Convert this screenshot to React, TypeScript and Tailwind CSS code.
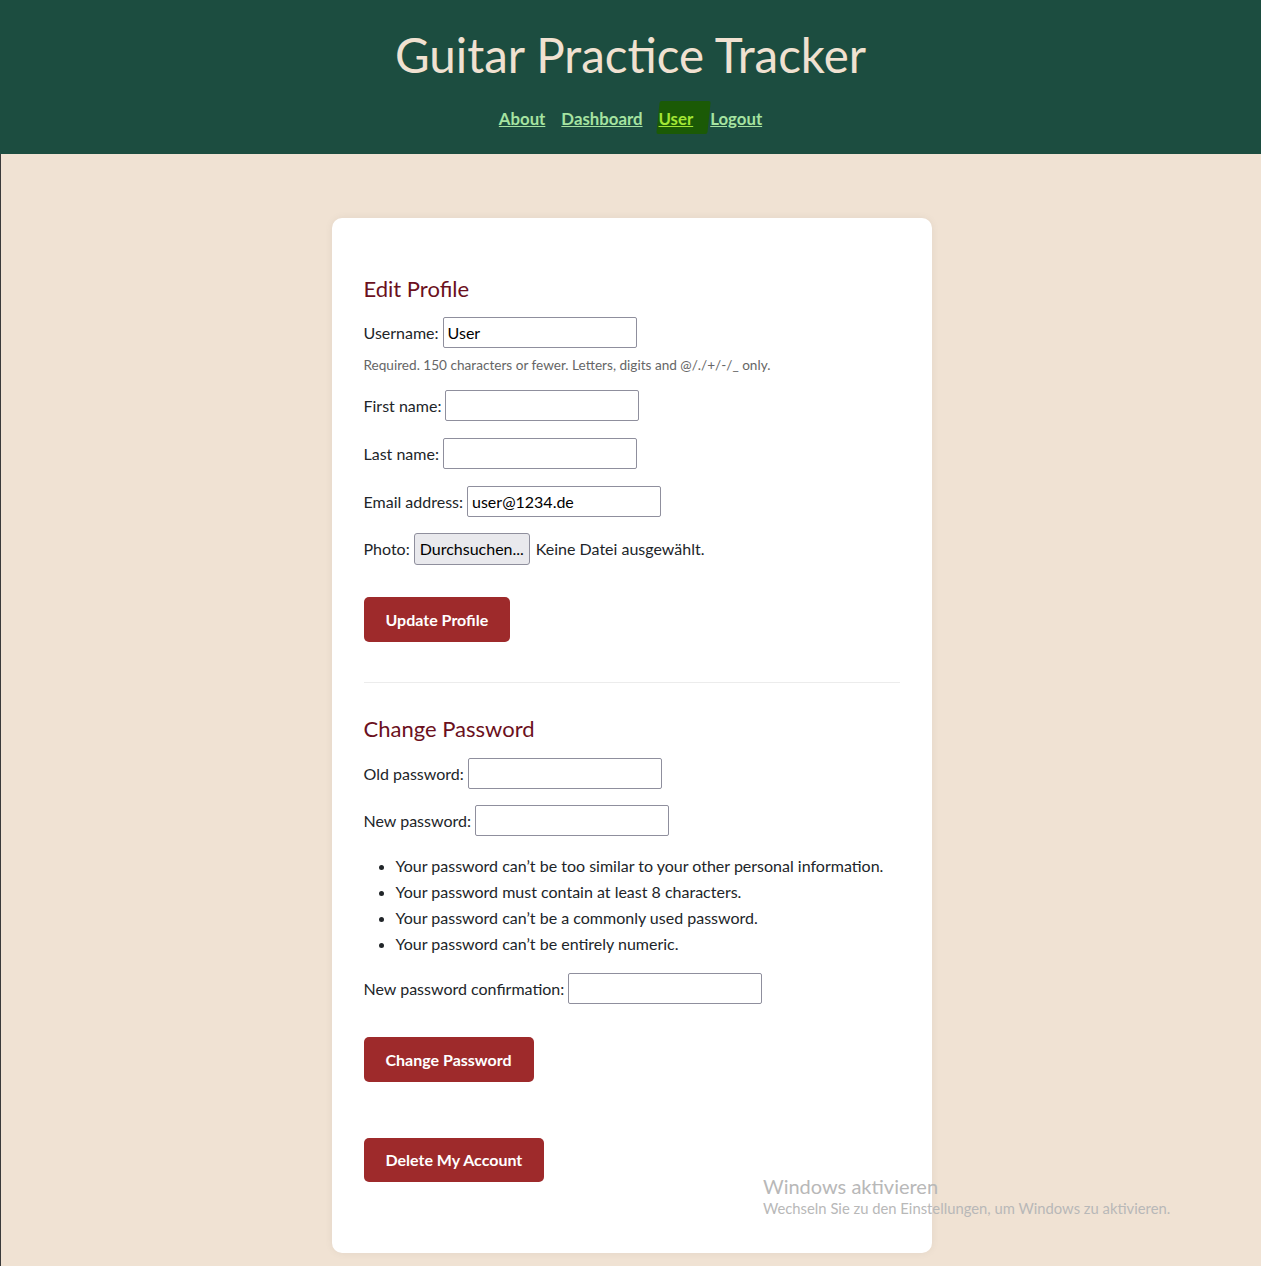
import React from "react";

const font = { fontFamily: 'Lato, "Noto Sans", sans-serif' };

function Field({ label, value = "", type = "text" }: { label: string; value?: string; type?: string }) {
  return (
    <div className="flex items-center text-[16px] text-[#212529]">
      <label>{label}</label>
      <input
        type={type}
        defaultValue={value}
        className="ml-[4px] h-[31px] w-[194px] rounded-[2px] border border-[#8f8f9d] bg-white px-[4px] text-[16px] text-black outline-none"
        style={font}
      />
    </div>
  );
}

function RedButton({ children, tall = true }: { children: React.ReactNode; tall?: boolean }) {
  return (
    <button
      className={
        tall
          ? "h-[45px] rounded-[5px] bg-[#9e2a2b] px-[22px] text-[16px] font-bold text-white"
          : "h-[44px] rounded-[5px] bg-[#9e2a2b] px-[22px] text-[16px] font-bold text-white"
      }
    >
      {children}
    </button>
  );
}

export default function App() {
  const rules = [
    "Your password can’t be too similar to your other personal information.",
    "Your password must contain at least 8 characters.",
    "Your password can’t be a commonly used password.",
    "Your password can’t be entirely numeric.",
  ];

  return (
    <div className="relative min-h-[1266px] bg-[#f0e2d3] shadow-[inset_1px_0_0_#3a3a3a]" style={font}>
      <header className="flex h-[154px] flex-col items-center bg-[#1c4d40]">
        <h1 className="mt-[25px] text-[47.5px] leading-[60px] text-[#f0e1d1]">Guitar Practice Tracker</h1>
        <nav className="mt-[21px] flex items-center gap-[16px] text-[16.8px] font-bold">
          <a className="text-[#a6e3a1] underline">About</a>
          <a className="text-[#a6e3a1] underline">Dashboard</a>
          <span className="relative pr-[15px]">
            <span className="absolute -top-[5px] -bottom-[3px] -left-[1px] right-0 -skew-x-6 rounded-[2px] bg-[#1b5a06]" />
            <a className="relative text-[#a3e635] underline">User</a>
          </span>
          <a className="-ml-[14px] text-[#a6e3a1] underline">Logout</a>
        </nav>
      </header>

      <main className="flex justify-center pt-[64px] pb-[13px] pl-[2px]">
        <div className="w-[600px] rounded-[10px] bg-white px-[32px] pt-[57px] pb-[71px] shadow-[0_0_8px_rgba(0,0,0,0.06)]">
          <h2 className="text-[22px] leading-[28px] text-[#6b1020]">Edit Profile</h2>
          <div className="mt-[14px]">
            <Field label="Username:" value="User" />
          </div>
          <p className="mt-[8px] text-[13.6px] leading-[18px] text-[#666]">
            Required. 150 characters or fewer. Letters, digits and @/./+/-/_ only.
          </p>
          <div className="mt-[16px] flex flex-col gap-[17px]">
            <Field label="First name:" />
            <Field label="Last name:" />
            <Field label="Email address:" value="user@1234.de" type="email" />
          </div>
          <div className="mt-[16px] flex items-center text-[16px] text-[#212529]">
            <span>Photo:</span>
            <span className="ml-[4px] flex h-[32px] items-center rounded-[3px] border border-[#8f8f9d] bg-[#e9e9ed] px-[5px] text-black">
              Durchsuchen...
            </span>
            <span className="ml-[6px]">Keine Datei ausgewählt.</span>
          </div>
          <div className="mt-[32px]">
            <RedButton>Update Profile</RedButton>
          </div>

          <hr className="mt-[40px] border-t border-[#ececec]" />

          <h2 className="mt-[32px] text-[22px] leading-[28px] text-[#6b1020]">Change Password</h2>
          <div className="mt-[15px] flex flex-col gap-[16px]">
            <Field label="Old password:" type="password" />
            <Field label="New password:" type="password" />
          </div>
          <ul className="mt-[17px] list-disc pl-[32px] text-[16px] leading-[26px] text-[#212529]">
            {rules.map((r) => (
              <li key={r} className="whitespace-nowrap">{r}</li>
            ))}
          </ul>
          <div className="mt-[16px]">
            <Field label="New password confirmation:" type="password" />
          </div>
          <div className="mt-[33px]">
            <RedButton>Change Password</RedButton>
          </div>
          <div className="mt-[56px]">
            <RedButton tall={false}>Delete My Account</RedButton>
          </div>
        </div>
      </main>

      <div className="pointer-events-none absolute left-[763px] top-[1174px] text-[#b8b8b8]">
        <div className="text-[20px] leading-[24px]">Windows aktivieren</div>
        <div className="text-[14.8px] leading-[20px]">
          Wechseln Sie zu den Einstellungen, um Windows zu aktivieren.
        </div>
      </div>
    </div>
  );
}
